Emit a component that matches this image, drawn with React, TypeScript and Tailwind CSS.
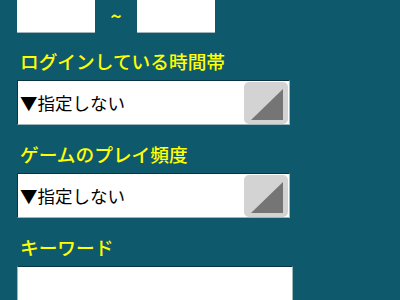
import React from "react";

const font = { fontFamily: '"Noto Sans CJK JP", "Noto Sans", sans-serif' };

function SelectBox({ value }: { value: string }) {
  return (
    <div className="flex h-[45px] w-[273px] items-center justify-between border border-t-[#0a3344] border-l-[#0a3344] border-r-[#9fb6bd] border-b-[#9fb6bd] bg-white pl-[2px] pr-[1px]">
      <span className="text-[17.5px] leading-none text-black">{value}</span>
      <div className="relative h-[42px] w-[44px] rounded-[5px] bg-[#d3d3d3]">
        <svg className="absolute left-[7px] top-[7px]" width="33" height="32" viewBox="0 0 33 32">
          <polygon points="0,31 32,31 32,0" fill="#757575" />
        </svg>
      </div>
    </div>
  );
}

function Label({ children }: { children: React.ReactNode }) {
  return (
    <div className="pt-[17px] pb-[7px] pl-[3px] text-[18.7px] leading-[24px] font-medium text-[#ffff00]">
      {children}
    </div>
  );
}

export default function App() {
  return (
    <div className="h-[300px] w-[400px] overflow-hidden bg-[#0f596d] pl-[17px]" style={font}>
      <div className="flex items-start">
        <div className="h-[32px] w-[78px] bg-white shadow-[0_1px_0_#9fb6bd]" />
        <div className="flex w-[42px] justify-center pt-[4px] text-[20px] leading-[24px] font-medium text-[#ffff00]">~</div>
        <div className="h-[32px] w-[78px] bg-white shadow-[0_1px_0_#9fb6bd]" />
      </div>
      <Label>ログインしている時間帯</Label>
      <SelectBox value="▼指定しない" />
      <Label>ゲームのプレイ頻度</Label>
      <SelectBox value="▼指定しない" />
      <Label>キーワード</Label>
      <div className="h-[40px] w-[276px] border border-[#9fb6bd] border-t-[#0a3344] bg-white" />
    </div>
  );
}
